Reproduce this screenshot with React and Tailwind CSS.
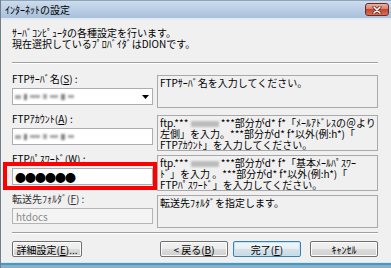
import React from 'react'

function Blur({ className }) {
  return <span className={`inline-block align-middle bg-[#8f8f8f] blur-[1px] opacity-80 ${className}`} />
}

function Smudge() {
  // masked (blurred) input content
  return (
    <span className="flex items-center gap-[3px] h-full">
      <Blur className="w-[6px] h-[4px]" />
      <Blur className="w-[3px] h-[6px] bg-[#555]" />
      <Blur className="w-[10px] h-[3px]" />
      <Blur className="w-[4px] h-[5px]" />
      <Blur className="w-[8px] h-[3px]" />
      <Blur className="w-[4px] h-[6px] bg-[#666]" />
      <Blur className="w-[6px] h-[3px]" />
    </span>
  )
}

function Btn({ children, primary, className = '' }) {
  return (
    <div
      className={`h-[16px] flex items-center justify-center rounded-[2px] border ${
        primary
          ? 'border-[#3c7fb1] shadow-[inset_0_0_0_1px_#bfe4f7] bg-[linear-gradient(#f2f7fa,#e6eef3_50%,#d6e3ea_50%,#c9d8e1)]'
          : 'border-[#707070] shadow-[inset_0_0_0_1px_#fbfbfb] bg-[linear-gradient(#f2f2f2,#ebebeb_50%,#dddddd_50%,#cfcfcf)]'
      } ${className}`}
    >
      {children}
    </div>
  )
}

function DescBox({ className = '', children }) {
  return (
    <div className={`flex-none w-[221px] mt-[2px] border border-[#a9a9a9] px-[2px] pt-[1px] whitespace-nowrap overflow-hidden ${className}`}>
      {children}
    </div>
  )
}

export default function App() {
  return (
    <div className="w-[391px] h-[268px] flex flex-col overflow-hidden bg-[#f0f0f0] border-l border-[#717f8d] font-['Noto_Sans_CJK_JP','Noto_Sans_CJK_SC',sans-serif] text-[10px] leading-[11px] text-black">
      {/* title bar */}
      <div className="h-[18px] flex items-center pl-[4px] pr-[2px] bg-[linear-gradient(#cddcee,#b6cbe3_60%,#a9c0dc)] border-t border-[#8ea3b8]">
        <span>ｲﾝﾀｰﾈｯﾄの設定</span>
        <div className="ml-auto w-[24px] h-[13px] rounded-[3px] border border-[#6d2a22] bg-[linear-gradient(#eab0a2,#d8786a_50%,#c4452e_50%,#d4715a)] flex items-center justify-center">
          <svg width="10" height="8" viewBox="0 0 10 8">
            <path d="M2 1 L8 7 M8 1 L2 7" stroke="#5a1d14" strokeWidth="3" strokeLinecap="round" />
            <path d="M2 1 L8 7 M8 1 L2 7" stroke="#ffffff" strokeWidth="1.6" strokeLinecap="round" />
          </svg>
        </div>
      </div>
      <div className="h-[2px] bg-[#e3eaf2]" />

      {/* body */}
      <div className="flex-1 flex flex-col pl-[11px] pr-[13px] pt-[7px]">
        <p>ｻｰﾊﾞｺﾝﾋﾟｭｰﾀの各種設定を行います。</p>
        <p>現在選択しているﾌﾟﾛﾊﾞｲﾀﾞはDIONです。</p>

        <div className="mt-[13px] border-t border-[#a0a0a0] border-b border-b-white" />

        <div className="mt-[9px] flex flex-col">
          {/* row 1 */}
          <div className="h-[40px] flex gap-[4px]">
            <div className="w-[141px] flex flex-col">
              <span>FTPｻｰﾊﾞ名(<u>S</u>) :</span>
              <div className="mt-[4px] h-[17px] bg-white border border-[#abadb3] flex items-center pl-[2px] pr-[3px]">
                <Smudge />
                <svg className="ml-auto" width="7" height="4" viewBox="0 0 7 4">
                  <polygon points="0,0 7,0 3.5,4" fill="#000" />
                </svg>
              </div>
            </div>
            <DescBox className="h-[33px]">FTPｻｰﾊﾞ名を入力してください。</DescBox>
          </div>

          {/* row 2 */}
          <div className="h-[40px] flex gap-[4px]">
            <div className="w-[141px] flex flex-col">
              <span>FTPｱｶｳﾝﾄ(<u>A</u>) :</span>
              <div className="mt-[4px] h-[17px] bg-white border border-[#abadb3] flex items-center pl-[2px]">
                <Smudge />
              </div>
            </div>
            <DescBox className="h-[36px]">
              ftp.*** <Blur className="w-[28px] h-[6px] bg-[#b0b0b0]" /> ***部分がd* f*「ﾒｰﾙｱﾄﾞﾚｽの＠より
              <br />
              左側」を入力。***部分がd* f*以外(例:h*)「
              <br />
              FTPｱｶｳﾝﾄ」を入力してください。
            </DescBox>
          </div>

          {/* row 3 */}
          <div className="h-[40px] flex gap-[4px]">
            <div className="w-[141px] flex flex-col relative">
              <span>FTPﾊﾟｽﾜｰﾄﾞ(<u>W</u>) :</span>
              <div className="mt-[4px] h-[17px] bg-white border border-[#abadb3] flex items-center pl-[2px]">
                <span className="text-[11px] leading-[10px] tracking-[-1px]">●●●●●●</span>
              </div>
              {/* red highlight annotation */}
              <div className="absolute left-[-9px] top-[9px] w-[154px] h-[28px] border-[4px] border-[#ff0000]" />
            </div>
            <DescBox className="h-[36px]">
              ftp.*** <Blur className="w-[28px] h-[6px] bg-[#b0b0b0]" /> ***部分がd* f*「基本ﾒｰﾙﾊﾟｽﾜｰ
              <br />
              ﾄﾞ」を入力 。***部分がd* f*以外(例:h*)「
              <br />
              FTPﾊﾟｽﾜｰﾄﾞ」を入力してください。
            </DescBox>
          </div>

          {/* row 4 */}
          <div className="h-[36px] flex gap-[4px]">
            <div className="w-[141px] flex flex-col">
              <span className="text-[#333]">転送先ﾌｫﾙﾀﾞ(<u>F</u>) :</span>
              <div className="mt-[4px] h-[16px] bg-[#f4f4f4] border border-[#b5b5b5] flex items-center pl-[3px] text-[#8a8a8a]">
                htdocs
              </div>
            </div>
            <DescBox className="h-[33px]">転送先ﾌｫﾙﾀﾞを指定します。</DescBox>
          </div>
        </div>

        <div className="mt-[3px] border-t border-[#a0a0a0] border-b border-b-white" />

        <div className="mt-[7px] flex items-center">
          <Btn className="w-[70px]">詳細設定(<u>E</u>)...</Btn>
          <Btn className="w-[68px] ml-auto">&lt; 戻る(<u>B</u>)</Btn>
          <Btn primary className="w-[68px] ml-[5px]">完了(<u>F</u>)</Btn>
          <Btn className="w-[68px] ml-[9px]">ｷｬﾝｾﾙ</Btn>
        </div>
      </div>

      {/* bottom frame */}
      <div className="h-[1px] bg-[#d7e6ef]" />
      <div className="h-[2px] bg-[#3f9cc6]" />
      <div className="h-[3px] bg-[#8eaec5]" />
    </div>
  )
}
